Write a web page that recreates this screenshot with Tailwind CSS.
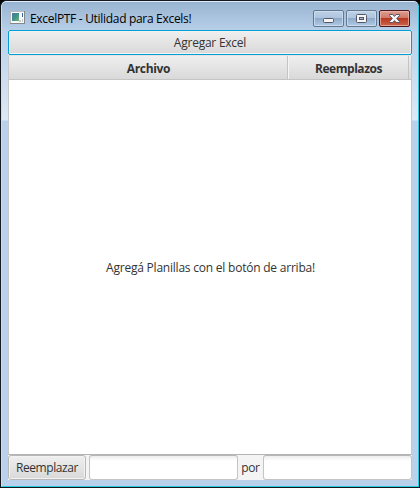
<!DOCTYPE html>
<html lang="es">
<head>
<meta charset="utf-8">
<title>ExcelPTF</title>
<script src="https://cdn.jsdelivr.net/npm/@tailwindcss/browser@4"></script>
</head>
<body class="bg-black overflow-hidden">
<div class="w-[420px] h-[488px] border border-[#15191d] rounded-t-[6px] overflow-hidden font-['Open_Sans','Noto_Sans',sans-serif] text-[12px] leading-4 text-[#333]">
  <div class="w-[418px] h-[486px] flex flex-col border border-l-[#c9dff4] border-t-[#dceafa] border-r-[#23cbe5] border-b-[#23cbe5] rounded-t-[5px] px-[6px] pb-[6px] bg-[#b9d1ea] bg-[linear-gradient(#99b4d1_0,#b9d1ea_30px,#dce8f5_118px,#b9d1ea_119px)]">
    <header class="h-[28px] shrink-0 flex items-start pt-2 pl-0.5">
      <svg class="w-4 h-[14px] mt-px shrink-0" viewBox="0 0 16 14" shape-rendering="crispEdges">
        <defs><linearGradient id="pic" x2="1" y2="1"><stop stop-color="#4a7c9f"/><stop offset=".5" stop-color="#438f8b"/><stop offset="1" stop-color="#70b873"/></linearGradient></defs>
        <path d="M0 0h15v13H0z" fill="#83888c"/><path d="M0 0h14v12H0z" fill="#b6babe"/><path d="M1 1h13v11H1z" fill="#f8f8f8"/>
        <path d="M2 2h7v8H2z" fill="url(#pic)"/><path d="M12 2h1v4h-1z" fill="#3d6aa0"/><path d="M9 9h2v2H9zM12 8h1v3h-1z" fill="#c5c9cc"/>
      </svg>
      <h1 class="ml-1 pt-px text-black text-[12px] tracking-[-0.31px] whitespace-nowrap">ExcelPTF - Utilidad para Excels!</h1>
      <div class="ml-auto flex gap-0.5 pr-0.5">
        <svg class="w-[31px] h-[17px]" viewBox="0 0 31 17">
          <defs><linearGradient id="blue" x2="0" y2="1"><stop stop-color="#bfd2e7"/><stop offset=".48" stop-color="#adc4dd"/><stop offset=".5" stop-color="#8eabc9"/><stop offset="1" stop-color="#b3cde8"/></linearGradient></defs>
          <rect x=".5" y=".5" width="30" height="16" rx="1.5" fill="url(#blue)" stroke="#62788f"/><rect x="1.5" y="1.5" width="28" height="14" rx="1" fill="none" stroke="#d3e2f2" stroke-opacity=".75"/>
          <rect x="10.5" y="8.5" width="10" height="4" rx="1" fill="#f5f5f5" stroke="#535666"/>
        </svg>
        <svg class="w-[31px] h-[17px]" viewBox="0 0 31 17">
          <rect x=".5" y=".5" width="30" height="16" rx="1.5" fill="url(#blue)" stroke="#62788f"/><rect x="1.5" y="1.5" width="28" height="14" rx="1" fill="none" stroke="#d3e2f2" stroke-opacity=".75"/>
          <rect x="10.5" y="4.5" width="10" height="8" rx="1" fill="#f5f5f5" stroke="#535666"/><rect x="13.5" y="7.5" width="4" height="2" fill="#9db9d5" stroke="#535666"/>
        </svg>
        <svg class="w-[31px] h-[17px]" viewBox="0 0 31 17">
          <defs><linearGradient id="red" x2="0" y2="1"><stop stop-color="#e0a094"/><stop offset=".47" stop-color="#cf7768"/><stop offset=".5" stop-color="#b83822"/><stop offset="1" stop-color="#d0674f"/></linearGradient></defs>
          <rect x=".5" y=".5" width="30" height="16" rx="1.5" fill="url(#red)" stroke="#4e1720"/><rect x="1.5" y="1.5" width="28" height="14" rx="1" fill="none" stroke="#eebdb1" stroke-opacity=".7"/>
          <path d="M10.5 4.5h3.3l1.7 1.9 1.7-1.9h3.3v1l-2.8 3 2.8 3v1h-3.3l-1.7-1.9-1.7 1.9h-3.3v-1l2.8-3-2.8-3z" fill="#f6f6f6" stroke="#535666"/>
        </svg>
      </div>
    </header>
    <main class="w-[404px] flex-1 min-h-0 flex flex-col bg-[#f4f4f4]">
      <button class="h-[25px] shrink-0 pt-px rounded-[2px] border border-[#039ed3] bg-linear-to-b from-[#efefef] to-[#d9d9d9] shadow-[inset_0_0_0_1px_#f2f2f2] tracking-[-0.24px]">Agregar Excel</button>
      <section class="flex-1 flex flex-col border border-t-[#e4e4e4] border-x-[#c8c8c8] border-b-[#b5b5b5] bg-white">
        <div class="h-6 shrink-0 flex bg-linear-to-b from-[#efefef] to-[#d9d9d9] border-b border-[#c4c4c4] font-bold text-center leading-[25px]">
          <div class="w-[279px] pl-px border-r border-[#c4c4c4] tracking-[-0.33px]">Archivo</div>
          <div class="w-[121px] border-r border-[#c4c4c4] border-l border-l-[#f5f5f5] tracking-[-0.45px]">Reemplazos</div>
        </div>
        <p class="flex-1 flex items-center justify-center pt-px pl-px tracking-[-0.22px] whitespace-nowrap">Agregá Planillas con el botón de arriba!</p>
      </section>
      <footer class="h-[25px] shrink-0 flex items-stretch">
        <button class="w-[78px] pt-px rounded-[3px] border border-[#b7b7b7] bg-linear-to-b from-[#efefef] to-[#d9d9d9] shadow-[inset_0_0_0_1px_#f2f2f2] tracking-[-0.4px]">Reemplazar</button>
        <input aria-label="Buscar" class="ml-[3px] w-[149px] rounded-[3px] border border-[#c4c4c4] border-t-[#b7b7b7] bg-[linear-gradient(#ededed,#fff_5px)]">
        <span class="w-[25px] text-center leading-[26px] tracking-[-0.4px]">por</span>
        <input aria-label="Reemplazo" class="w-[149px] rounded-[3px] border border-[#c4c4c4] border-t-[#b7b7b7] bg-[linear-gradient(#ededed,#fff_5px)]">
      </footer>
    </main>
  </div>
</div>
</body>
</html>
